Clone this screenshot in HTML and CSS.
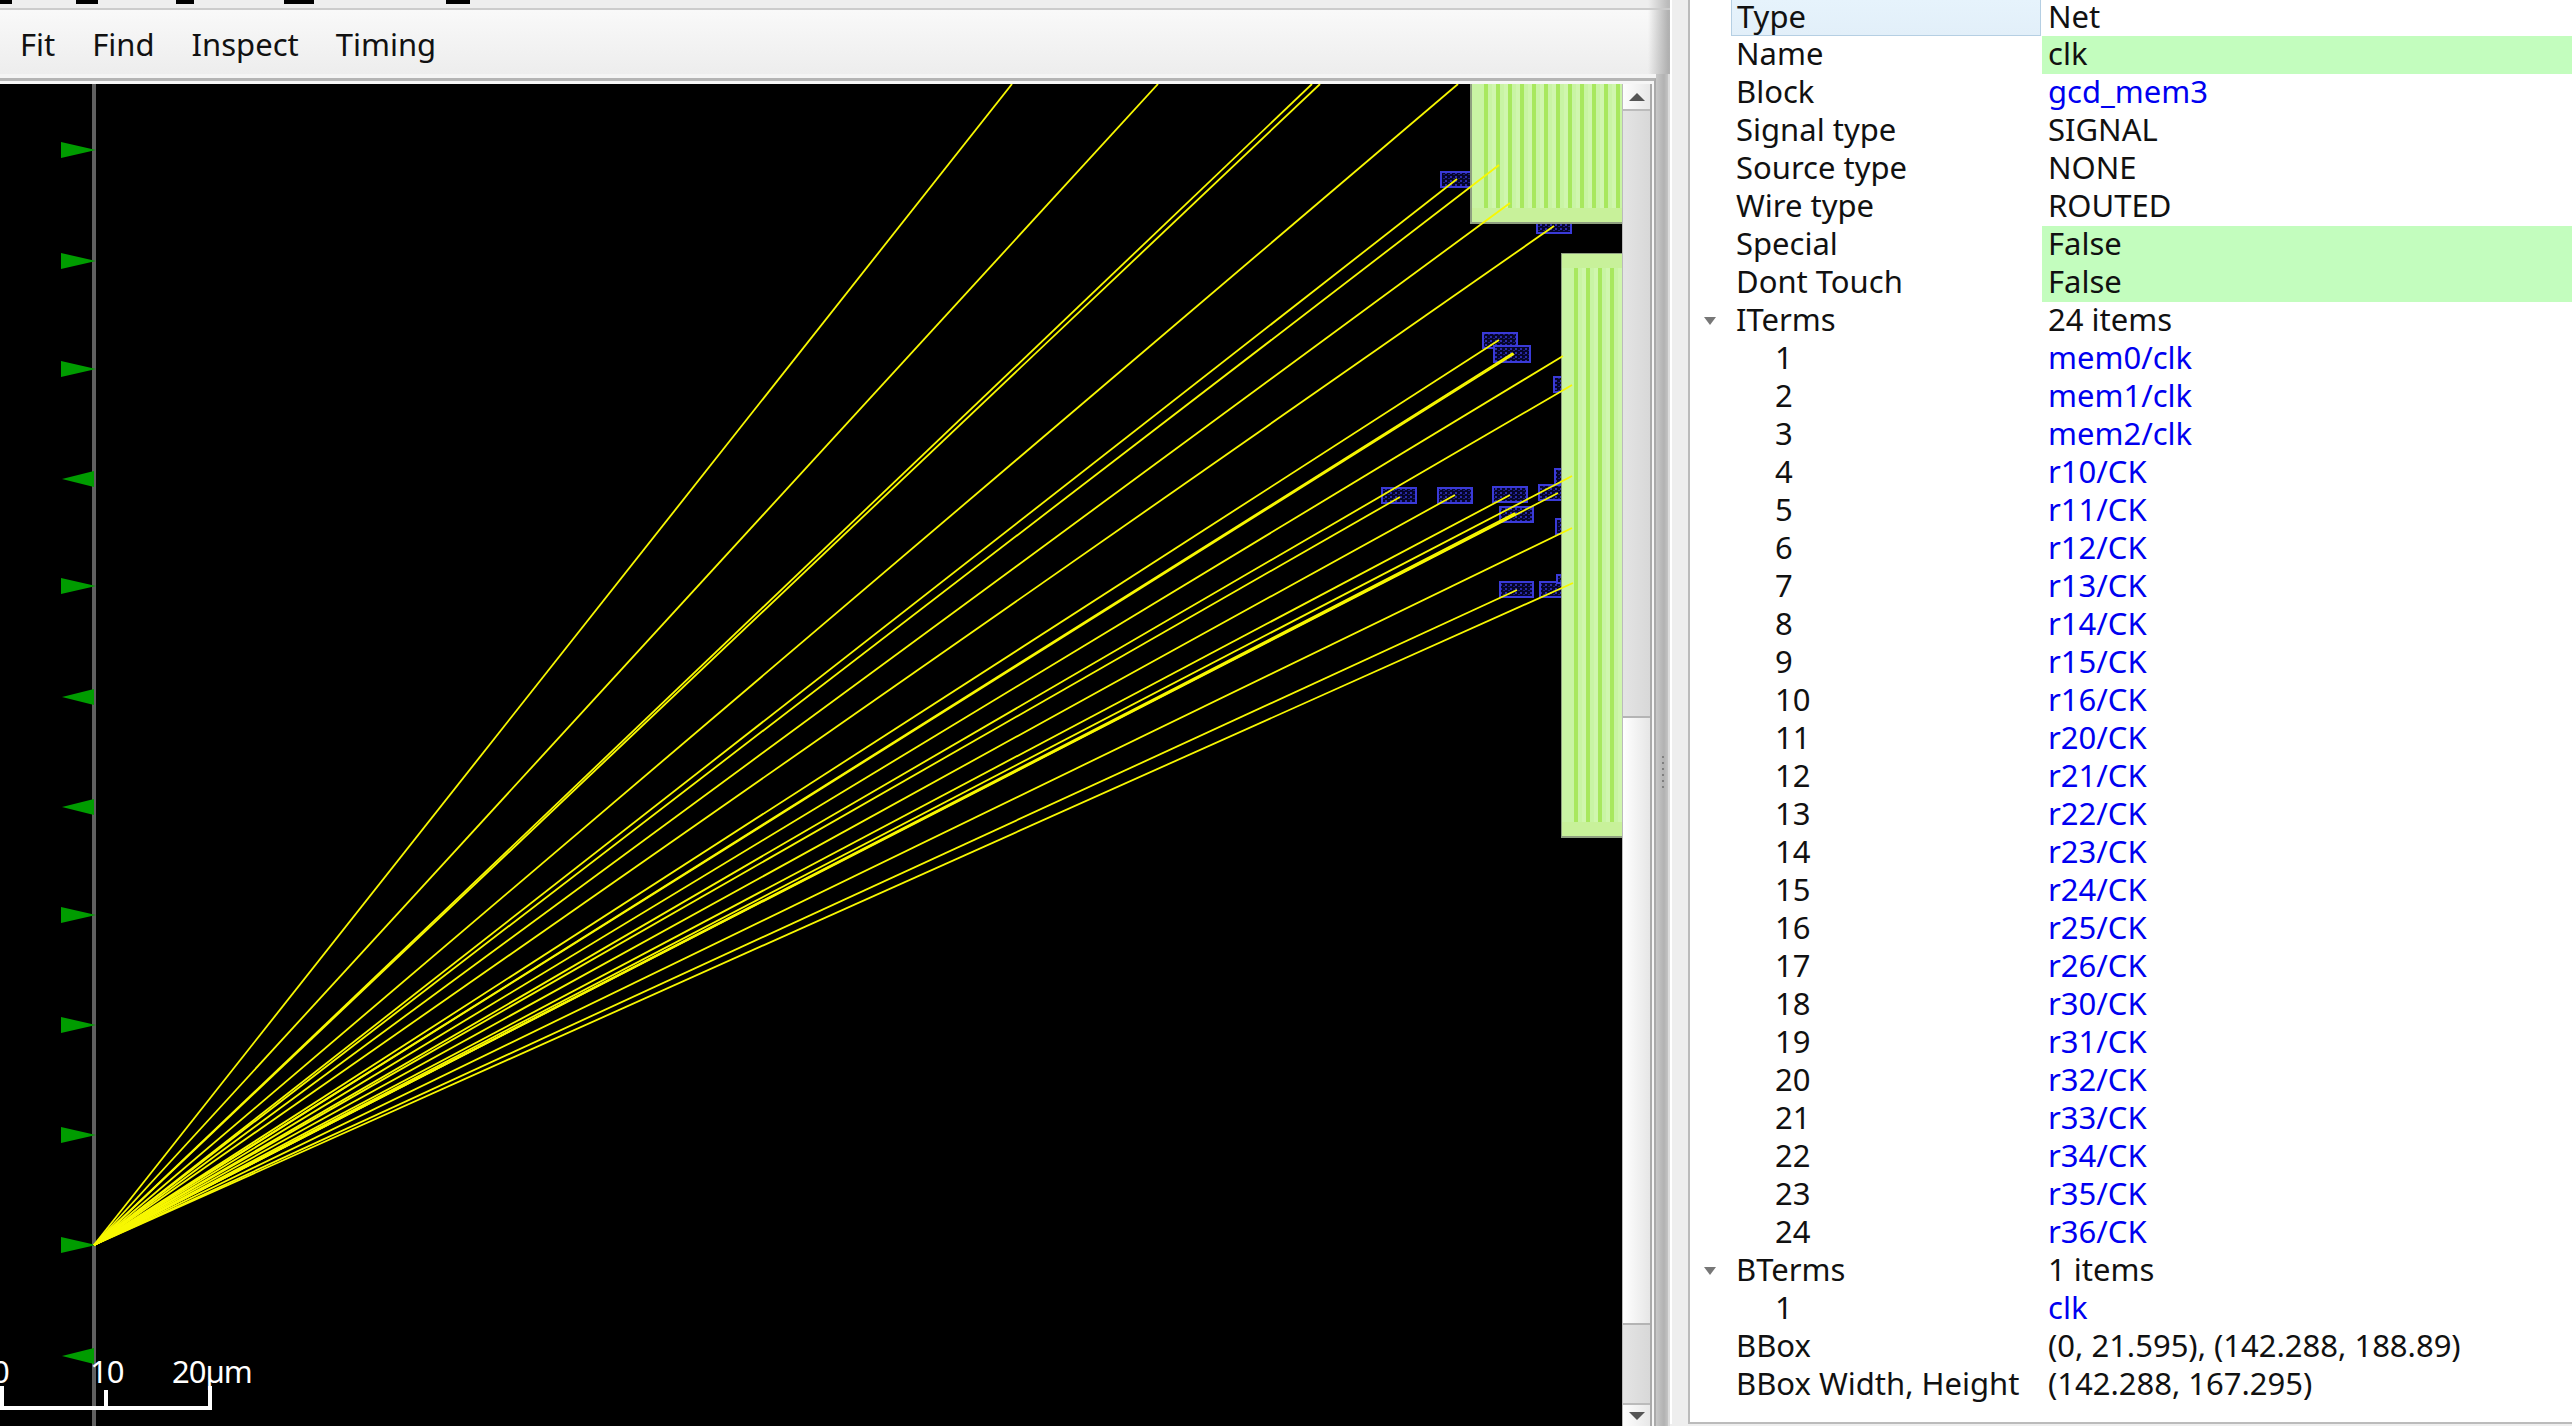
FILE: index.html
```html
<!DOCTYPE html>
<html lang="en">
<head>
<meta charset="utf-8">
<title>OpenROAD net inspector</title>
<link rel="stylesheet" href="styles.css">
</head>
<body>
<div class="window">
  <div class="left">
    <div class="strip">
      <i class="bit b1"></i><i class="bit b2"></i><i class="bit b3"></i><i class="bit b4"></i><i class="bit b5"></i>
    </div>
    <nav class="menubar">
      <span class="menu">Fit</span><span class="menu">Find</span><span class="menu">Inspect</span><span class="menu">Timing</span>
    </nav>
    <div class="view">
      <div class="frame-a"><div class="frame-b"><div class="frame-c">
        <svg class="canvas" width="1622" height="1342" viewBox="0 84 1622 1342" xmlns="http://www.w3.org/2000/svg">
          <defs>
            <pattern id="hatch" width="5" height="4" patternUnits="userSpaceOnUse"><rect width="5" height="4" fill="#05052a"/><rect width="2" height="2" fill="#2a2aa8"/><rect x="3" y="2" width="2" height="1" fill="#1c1c80"/></pattern>
            <pattern id="s1" x="1484" width="12" height="10" patternUnits="userSpaceOnUse"><rect width="12" height="10" fill="#c9f4a4"/><rect width="4" height="10" fill="#a8e85e"/><rect x="8" width="4" height="10" fill="#d0f6ae"/></pattern>
            <pattern id="s2" x="1574" width="12" height="10" patternUnits="userSpaceOnUse"><rect width="12" height="10" fill="#c9f4a4"/><rect width="4" height="10" fill="#a8e85e"/><rect x="8" width="4" height="10" fill="#d0f6ae"/></pattern>
          </defs>
          <g fill="url(#hatch)" stroke="#3a3ad8" stroke-width="2">
            <rect x="1441" y="172" width="34" height="15"/>
            <rect x="1537" y="218" width="34" height="15"/>
            <rect x="1483" y="333" width="34" height="15"/>
            <rect x="1494" y="346" width="36" height="16"/>
            <rect x="1554" y="377" width="30" height="15"/>
            <rect x="1555" y="469" width="30" height="15"/>
            <rect x="1539" y="485" width="34" height="15"/>
            <rect x="1493" y="487" width="34" height="15"/>
            <rect x="1438" y="488" width="34" height="15"/>
            <rect x="1382" y="488" width="34" height="15"/>
            <rect x="1500" y="507" width="33" height="15"/>
            <rect x="1556" y="519" width="30" height="15"/>
            <rect x="1500" y="582" width="33" height="15"/>
            <rect x="1540" y="582" width="34" height="15"/>
            <rect x="1557" y="575" width="30" height="8"/>
          </g>
          <g class="block">
            <rect x="1470" y="82" width="160" height="142" fill="#8f9f80"/>
            <rect x="1472" y="84" width="150" height="138" fill="#c8f19a"/>
            <rect x="1472" y="84" width="150" height="124" fill="#c9f4a4"/>
            <rect x="1484" y="84" width="138" height="124" fill="url(#s1)"/>
            <rect x="1561" y="253" width="70" height="585" fill="#8f9f80"/>
            <rect x="1562" y="254" width="60" height="582" fill="#c8f19a"/>
            <rect x="1562" y="268" width="60" height="554" fill="#c9f4a4"/>
            <rect x="1574" y="268" width="48" height="554" fill="url(#s2)"/>
          </g>
          <rect class="axis" x="92" y="84" width="4" height="1342"/>
          <g class="pins">
            <polygon points="61,142 61,158 96,150"/>
            <polygon points="61,253 61,269 96,261"/>
            <polygon points="61,361 61,377 96,369"/>
            <polygon points="94,471 94,487 62,479"/>
            <polygon points="61,578 61,594 96,586"/>
            <polygon points="94,689 94,705 62,697"/>
            <polygon points="94,799 94,815 62,807"/>
            <polygon points="61,907 61,923 96,915"/>
            <polygon points="61,1017 61,1033 96,1025"/>
            <polygon points="61,1127 61,1143 96,1135"/>
            <polygon points="61,1237 61,1253 96,1245"/>
            <polygon points="94,1348 94,1364 62,1356"/>
          </g>
          <g class="wires">
            <line x1="94" y1="1245" x2="1012" y2="84"/>
            <line x1="94" y1="1245" x2="1158" y2="84"/>
            <line x1="94" y1="1245" x2="1312" y2="84"/>
            <line x1="94" y1="1245" x2="1320" y2="84"/>
            <line x1="94" y1="1245" x2="1458" y2="84"/>
            <line x1="94" y1="1245" x2="1499" y2="165"/>
            <line x1="94" y1="1245" x2="1510" y2="203"/>
            <line x1="94" y1="1245" x2="1554" y2="226"/>
            <line x1="94" y1="1245" x2="1457" y2="179"/>
            <line x1="94" y1="1245" x2="1499" y2="340"/>
            <line x1="94" y1="1245" x2="1513" y2="353"/>
            <line x1="94" y1="1245" x2="1514" y2="354"/>
            <line x1="94" y1="1245" x2="1563" y2="356"/>
            <line x1="94" y1="1245" x2="1572" y2="385"/>
            <line x1="94" y1="1245" x2="1572" y2="476"/>
            <line x1="94" y1="1245" x2="1558" y2="493"/>
            <line x1="94" y1="1245" x2="1510" y2="495"/>
            <line x1="94" y1="1245" x2="1455" y2="495"/>
            <line x1="94" y1="1245" x2="1400" y2="497"/>
            <line x1="94" y1="1245" x2="1515" y2="513"/>
            <line x1="94" y1="1245" x2="1516" y2="514"/>
            <line x1="94" y1="1245" x2="1572" y2="528"/>
            <line x1="94" y1="1245" x2="1517" y2="590"/>
            <line x1="94" y1="1245" x2="1573" y2="583"/>
          </g>
          <g class="scale">
            <text x="-8" y="1383">0</text>
            <text x="90" y="1383">10</text>
            <text x="172" y="1383">20µm</text>
            <rect x="0" y="1406" width="212" height="4"/>
            <rect x="0" y="1386" width="4" height="24"/>
            <rect x="104" y="1390" width="4" height="20"/>
            <rect x="208" y="1386" width="4" height="24"/>
          </g>
        </svg>
        <div class="scrollbar">
          <div class="sb-btn"><svg width="16" height="8" viewBox="0 0 16 8"><path d="M0 8 8 0l8 8z" fill="#555"/></svg></div>
          <div class="sb-trough sb-upper"></div>
          <div class="sb-thumb"></div>
          <div class="sb-trough sb-lower"></div>
          <div class="sb-btn sb-end"><svg width="16" height="8" viewBox="0 0 16 8"><path d="M0 0h16l-8 8z" fill="#555"/></svg></div>
        </div>
      </div></div></div>
      <div class="grip"><i></i><i></i><i></i><i></i><i></i><i></i></div>
    </div>
  </div>
  <div class="gutter"></div>
  <section class="panel">
    <div class="tree">
      <div class="row head"><div class="label">Type</div><div class="value">Net</div></div>
      <div class="row"><div class="label">Name</div><div class="value edit">clk</div></div>
      <div class="row"><div class="label">Block</div><div class="value link">gcd_mem3</div></div>
      <div class="row"><div class="label">Signal type</div><div class="value">SIGNAL</div></div>
      <div class="row"><div class="label">Source type</div><div class="value">NONE</div></div>
      <div class="row"><div class="label">Wire type</div><div class="value">ROUTED</div></div>
      <div class="row"><div class="label">Special</div><div class="value edit">False</div></div>
      <div class="row"><div class="label">Dont Touch</div><div class="value edit">False</div></div>
      <div class="row"><div class="label parent"><svg class="twist" width="12" height="8" viewBox="0 0 12 8"><path d="M0 0h12L6 8z"/></svg>ITerms</div><div class="value">24 items</div></div>
      <div class="row"><div class="label child">1</div><div class="value link">mem0/clk</div></div>
      <div class="row"><div class="label child">2</div><div class="value link">mem1/clk</div></div>
      <div class="row"><div class="label child">3</div><div class="value link">mem2/clk</div></div>
      <div class="row"><div class="label child">4</div><div class="value link">r10/CK</div></div>
      <div class="row"><div class="label child">5</div><div class="value link">r11/CK</div></div>
      <div class="row"><div class="label child">6</div><div class="value link">r12/CK</div></div>
      <div class="row"><div class="label child">7</div><div class="value link">r13/CK</div></div>
      <div class="row"><div class="label child">8</div><div class="value link">r14/CK</div></div>
      <div class="row"><div class="label child">9</div><div class="value link">r15/CK</div></div>
      <div class="row"><div class="label child">10</div><div class="value link">r16/CK</div></div>
      <div class="row"><div class="label child">11</div><div class="value link">r20/CK</div></div>
      <div class="row"><div class="label child">12</div><div class="value link">r21/CK</div></div>
      <div class="row"><div class="label child">13</div><div class="value link">r22/CK</div></div>
      <div class="row"><div class="label child">14</div><div class="value link">r23/CK</div></div>
      <div class="row"><div class="label child">15</div><div class="value link">r24/CK</div></div>
      <div class="row"><div class="label child">16</div><div class="value link">r25/CK</div></div>
      <div class="row"><div class="label child">17</div><div class="value link">r26/CK</div></div>
      <div class="row"><div class="label child">18</div><div class="value link">r30/CK</div></div>
      <div class="row"><div class="label child">19</div><div class="value link">r31/CK</div></div>
      <div class="row"><div class="label child">20</div><div class="value link">r32/CK</div></div>
      <div class="row"><div class="label child">21</div><div class="value link">r33/CK</div></div>
      <div class="row"><div class="label child">22</div><div class="value link">r34/CK</div></div>
      <div class="row"><div class="label child">23</div><div class="value link">r35/CK</div></div>
      <div class="row"><div class="label child">24</div><div class="value link">r36/CK</div></div>
      <div class="row"><div class="label parent"><svg class="twist" width="12" height="8" viewBox="0 0 12 8"><path d="M0 0h12L6 8z"/></svg>BTerms</div><div class="value">1 items</div></div>
      <div class="row"><div class="label child">1</div><div class="value link">clk</div></div>
      <div class="row"><div class="label">BBox</div><div class="value">(0, 21.595), (142.288, 188.89)</div></div>
      <div class="row"><div class="label">BBox Width, Height</div><div class="value">(142.288, 167.295)</div></div>
    </div>
  </section>
</div>
</body>
</html>
```

FILE: styles.css
```css
html, body {
  margin: 0;
  height: 100%;
  overflow: hidden;
  background: #eee;
}
body {
  font-family: "Noto Sans", "Open Sans", sans-serif;
  font-size: 31px;
  letter-spacing: 0;
  color: #111;
}
.window {
  display: flex;
  height: 1426px;
  width: 2572px;
}
.left {
  width: 1670px;
  flex: none;
  display: flex;
  flex-direction: column;
}
.strip {
  height: 8px;
  border-bottom: 2px solid #ccc;
  background: linear-gradient(90deg, #eee 1648px, #bbb 1668px);
  position: relative;
}
.bit {
  position: absolute;
  top: 0;
  height: 4px;
  background: #000;
}
.b1 { left: 0; width: 12px; }
.b2 { left: 76px; width: 22px; }
.b3 { left: 176px; width: 18px; }
.b4 { left: 284px; width: 30px; }
.b5 { left: 446px; width: 24px; }
.menubar {
  height: 62px;
  border-bottom: 2px solid #aaa;
  padding: 3px 0 0 20px;
  box-sizing: content-box;
  margin-bottom: -3px;
  display: flex;
  gap: 37px;
  align-items: center;
  background:
    linear-gradient(90deg, rgba(187,187,187,0) 1648px, rgba(170,170,170,.9) 1668px),
    linear-gradient(#f9f9f9, #ededed);
}
.view {
  flex: 1;
  min-height: 0;
  display: flex;
  padding-top: 3px;
  background: linear-gradient(90deg, #f4f4f4 1656px, #c8c8c8 1656px, #b2b2b2 1664px, #c4c4c4 1668px, #dcdcdc 1668px);
}
.frame-a {
  width: 1656px;
  flex: none;
  box-sizing: border-box;
  margin-top: 1px;
  border-top: 3px solid #b4b4b4;
  border-right: 2px solid #aaa;
}
.frame-b {
  height: 100%;
  box-sizing: border-box;
  padding: 3px 2px 0 0;
  background: #f6f6f6;
}
.frame-c {
  height: 100%;
  display: flex;
  box-sizing: border-box;
  border-right: 2px solid #aaa;
}
.canvas {
  display: block;
  flex: none;
  background: #000;
}
.block { stroke: none; }
.axis { fill: #606060; }
.pins polygon { fill: #009c00; }
.wires line {
  stroke: #f8f800;
  stroke-width: 1.8;
}
.scale rect { fill: #fff; }
.scale text {
  fill: #fff;
  font-size: 31px;
  letter-spacing: -1px;
}
.scrollbar {
  width: 28px;
  flex: none;
  display: flex;
  flex-direction: column;
  box-sizing: border-box;
  border-left: 1px solid #bbb;
}
.sb-btn {
  height: 27px;
  flex: none;
  display: flex;
  align-items: center;
  justify-content: center;
  background: linear-gradient(90deg, #fdfdfd, #e8e8e8);
  border-bottom: 2px solid #bbb;
  box-sizing: border-box;
}
.sb-end {
  height: 23px;
  border-bottom: 0;
  border-top: 2px solid #bbb;
}
.sb-trough { background: linear-gradient(90deg, #e4e4e4, #d8d8d8); }
.sb-upper { height: 605px; flex: none; }
.sb-lower { flex: 1; }
.sb-thumb {
  height: 609px;
  flex: none;
  box-sizing: border-box;
  border-top: 2px solid #b4b4b4;
  border-bottom: 2px solid #b4b4b4;
  background: linear-gradient(90deg, #fff, #e6e6e6);
}
.grip {
  width: 14px;
  flex: none;
  box-sizing: border-box;
  padding: 679px 0 0 6px;
  display: flex;
  flex-direction: column;
  gap: 4px;
}
.grip i {
  display: block;
  width: 2px;
  height: 2px;
  background: #808080;
}
.gutter {
  width: 20px;
  flex: none;
  box-sizing: border-box;
  background: #eee;
  border-left: 2px solid #fff;
  border-right: 2px solid #bbb;
  height: 1424px;
}
.panel {
  flex: 1;
  min-width: 0;
  height: 1424px;
  box-sizing: border-box;
  background: #fff;
  border-bottom: 2px solid #bbb;
  overflow: hidden;
}
.tree { margin-top: 0; }
.row {
  display: grid;
  grid-template-columns: 352px 1fr;
  height: 38px;
  line-height: 35px;
  white-space: nowrap;
}
.row.head {
  height: 36px;
  line-height: 32px;
}
.label { padding-left: 46px; }
.child { padding-left: 85px; }
.parent {
  padding-left: 14px;
  display: flex;
  align-items: flex-start;
}
.twist {
  fill: #777;
  margin-right: 20px;
  flex: none;
  align-self: center;
}
.value { padding-left: 6px; }
.edit { background: #c3fdbe; }
.link { color: #0000f0; }
.head .label {
  margin-left: 41px;
  padding-left: 5px;
  margin-right: 1px;
  box-sizing: border-box;
  border: 1px solid #b5cfe3;
  border-top: 0;
  background: linear-gradient(#e6f3fc, #e2eff9);
}
```
